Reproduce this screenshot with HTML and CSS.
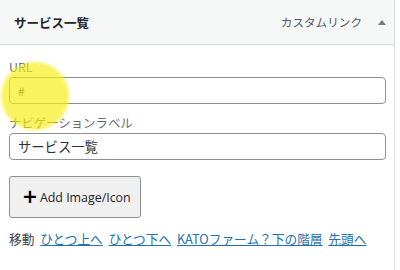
FILE: index.html
```html
<!DOCTYPE html>
<html lang="ja">
<head>
<meta charset="utf-8">
<link rel="stylesheet" href="styles.css">
</head>
<body>
<div class="panel">
  <div class="head">
    <span class="title">サービス一覧</span>
    <span class="meta"><span class="type">カスタムリンク</span><span class="arrow"></span></span>
  </div>
  <div class="body">
    <label class="lbl">URL</label>
    <div class="field">#</div>
    <label class="lbl lbl2">ナビゲーションラベル</label>
    <div class="field field2">サービス一覧</div>
    <button class="btn"><span class="plus">+</span>Add Image/Icon</button>
    <div class="move">移動 <a href="#">ひとつ上へ</a> <a href="#">ひとつ下へ</a> <a href="#">KATOファーム？下の階層</a> <a href="#">先頭へ</a></div>
  </div>
  <div class="cursor"></div>
</div>
</body>
</html>
```
FILE: styles.css
```css
html, body { margin: 0; padding: 0; background: #fff; }
body { font-family: "Noto Sans CJK JP", "Noto Sans", sans-serif; color: #1d2327; }
.panel { position: relative; width: 394px; height: 270px; border-right: 1px solid #dcdcde; }
.head { height: 44px; background: #f6f7f7; border-bottom: 1px solid #dcdcde; display: flex; align-items: center; justify-content: space-between; padding: 0 8px 0 14px; }
.title { font-size: 12.5px; font-weight: 700; color: #1d2327; }
.meta { display: flex; align-items: center; }
.type { font-size: 11.6px; color: #50575e; }
.arrow { width: 0; height: 0; border-left: 4px solid transparent; border-right: 4px solid transparent; border-bottom: 5px solid #787c82; margin-left: 16px; }
.body { padding: 14px 8px 0 9px; }
.lbl { display: block; font-size: 12.4px; line-height: 17px; color: #646970; }
.field { height: 25px; margin-top: 1px; border: 1px solid #8c8f94; border-radius: 4px; box-sizing: content-box; padding: 0 8px; font-size: 12px; line-height: 25px; color: #2c3338; }
.lbl2 { margin-top: 11px; }
.field2 { margin-top: 1px; font-size: 13.3px; }
.btn { display: flex; align-items: center; margin-top: 16px; height: 42px; width: 132px; padding: 0 0 0 12px; background: #f0f0f1; border: 1px solid #8c8f94; border-radius: 3px; font-family: "Open Sans", "Noto Sans", sans-serif; font-size: 12.4px; color: #1d2327; }
.plus { font-family: "DejaVu Sans", sans-serif; font-weight: 700; font-size: 19px; line-height: 1; margin-right: 2px; color: #000; position: relative; top: -1px; }
.move { margin-top: 12px; font-size: 12.7px; line-height: 18px; color: #3c434a; white-space: nowrap; }
.move a { color: #2271b1; text-decoration: underline; margin-left: 3px; }
.cursor { position: absolute; left: 1px; top: 62px; width: 68px; height: 68px; border-radius: 50%; background: rgba(248, 238, 20, 0.68); filter: blur(1.5px); pointer-events: none; }
```
